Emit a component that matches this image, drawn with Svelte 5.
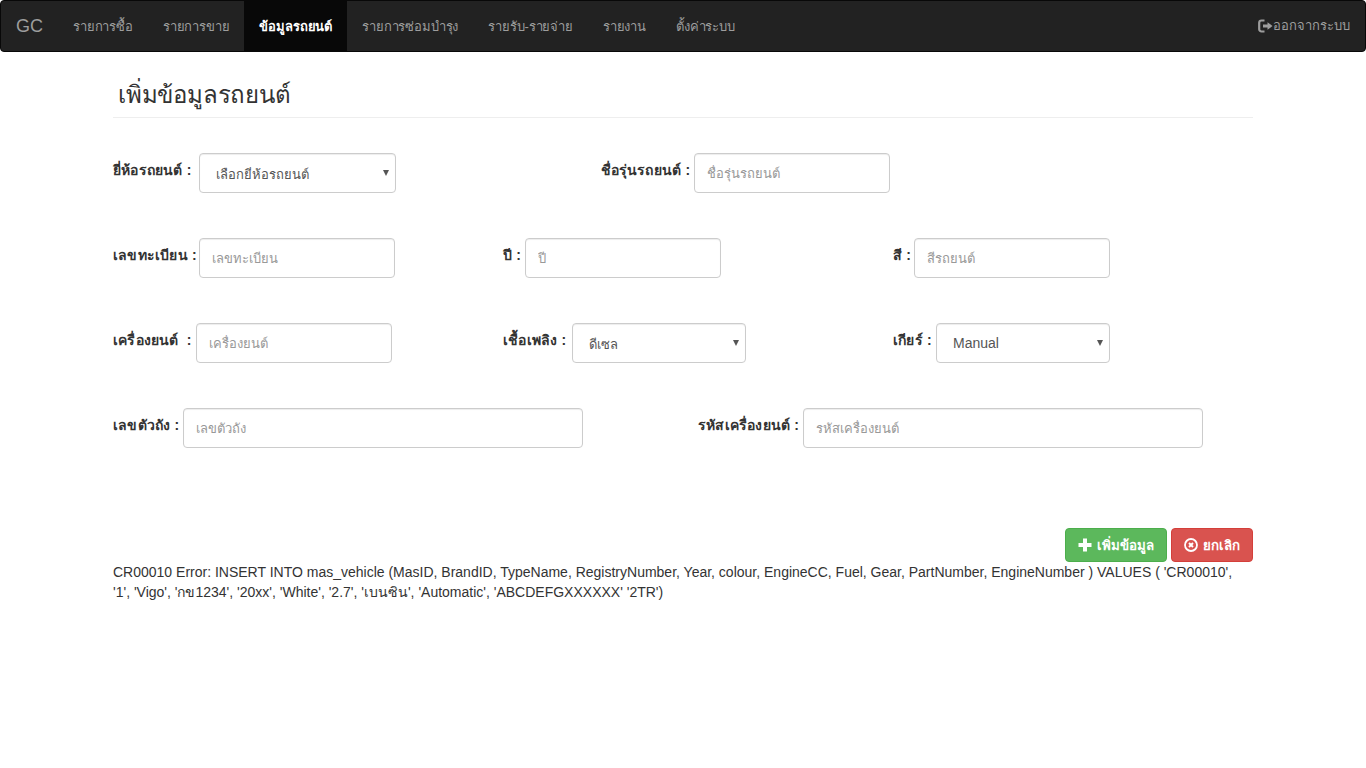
<script>
    const menu = [
        { label: 'รายการซื้อ' },
        { label: 'รายการขาย' },
        { label: 'ข้อมูลรถยนต์', active: true },
        { label: 'รายการซ่อมบำรุง' },
        { label: 'รายรับ-รายจ่าย' },
        { label: 'รายงาน' },
        { label: 'ตั้งค่าระบบ' }
    ];

    // col = bootstrap column span, gutter = label box width in front of the control
    const rows = [
        [
            { id: 'brand', label: 'ยี่ห้อรถยนต์ :', col: 'w5', gutter: 86, width: 197, options: ['เลือกยี่ห้อรถยนต์'] },
            { id: 'model', label: 'ชื่อรุ่นรถยนต์ :', col: 'w5', gutter: 93, width: 196, placeholder: 'ชื่อรุ่นรถยนต์' }
        ],
        [
            { id: 'reg', label: 'เลขทะเบียน :', col: 'w4', gutter: 86, width: 196, placeholder: 'เลขทะเบียน' },
            { id: 'year', label: 'ปี :', col: 'w4', gutter: 22, width: 196, placeholder: 'ปี' },
            { id: 'colour', label: 'สี :', col: 'w4', gutter: 21, width: 196, placeholder: 'สีรถยนต์' }
        ],
        [
            { id: 'engine', label: 'เครื่องยนต์\u00a0 :', col: 'w4', gutter: 83, width: 196, placeholder: 'เครื่องยนต์' },
            { id: 'fuel', label: 'เชื้อเพลิง :', col: 'w4', gutter: 69, width: 174, options: ['ดีเซล'] },
            { id: 'gear', label: 'เกียร์ :', col: 'w4', gutter: 43, width: 174, options: ['Manual'], latin: true }
        ],
        [
            { id: 'part', label: 'เลขตัวถัง :', col: 'w6', gutter: 70, width: 400, placeholder: 'เลขตัวถัง' },
            { id: 'engno', label: 'รหัสเครื่องยนต์ :', col: 'w6', gutter: 105, width: 400, placeholder: 'รหัสเครื่องยนต์' }
        ]
    ];
</script>

<nav class="navbar">
    <a class="brand" href="#top">GC</a>
    <ul class="nav">
        {#each menu as item}
            <li class:active={item.active}><a href="#top">{item.label}</a></li>
        {/each}
    </ul>
    <a class="logout" href="#top">
        <svg width="15" height="14" viewBox="0 0 15 14" aria-hidden="true">
            <path d="M6.500 1.500H3.500A2.300 2.300 0 0 0 1.200 3.800v6.400a2.300 2.300 0 0 0 2.300 2.300h3" fill="none" stroke="currentColor" stroke-width="2.200" />
            <path d="M5 5.600h4.500V3.200L14.500 7l-5 3.800V8.400H5z" fill="currentColor" />
        </svg>ออกจากระบบ
    </a>
</nav>

<div class="container">
    <div class="page-header"><h3>เพิ่มข้อมูลรถยนต์</h3></div>

    <div class="form">
        {#each rows as row}
            <div class="row">
                {#each row as field}
                    <div class="col {field.col}">
                        <label for={field.id} style="width: {field.gutter}px">{field.label}</label>
                        {#if field.options}
                            <span class="select-wrap" style="width: {field.width}px">
                                <select id={field.id} class:latin={field.latin}>
                                    {#each field.options as option}
                                        <option>{option}</option>
                                    {/each}
                                </select>
                            </span>
                        {:else}
                            <input id={field.id} style="width: {field.width}px" placeholder={field.placeholder} />
                        {/if}
                    </div>
                {/each}
            </div>
        {/each}
    </div>

    <div class="actions">
        <button class="btn success">
            <svg width="14" height="14" viewBox="0 0 14 14" aria-hidden="true">
                <path d="M5 .5h4v4.500h4.500v4H9v4.500H5V9H.5V5H5z" fill="currentColor" />
            </svg>
            เพิ่มข้อมูล
        </button>
        <button class="btn danger">
            <svg width="14" height="14" viewBox="0 0 14 14" aria-hidden="true">
                <circle cx="7" cy="7" r="6" fill="none" stroke="currentColor" stroke-width="1.800" />
                <path d="M5 5l4 4M9 5l-4 4" stroke="currentColor" stroke-width="2" />
            </svg>
            ยกเลิก
        </button>
    </div>

    <p class="sql">CR00010 Error: INSERT INTO mas_vehicle (MasID, BrandID, TypeName, RegistryNumber, Year, colour, EngineCC, Fuel, Gear, PartNumber, EngineNumber ) VALUES ( 'CR00010', '1', 'Vigo', 'กข1234', '20xx', 'White', '2.7', 'เบนซิน', 'Automatic', 'ABCDEFGXXXXXX' '2TR')</p>
</div>

<style>
    :global(body) {
        margin: 0;
        background: #fff;
        color: #333;
        font-family: "Liberation Sans", "Noto Sans", sans-serif;
        font-size: 14px;
        line-height: 20px;
    }

    .navbar {
        display: flex;
        align-items: stretch;
        box-sizing: border-box;
        height: 52px;
        background: #222;
        border: 1px solid #080808;
        border-radius: 4px;
    }

    .brand {
        padding: 15px;
        font-size: 18px;
        line-height: 20px;
        color: #9d9d9d;
        text-decoration: none;
    }

    .nav {
        display: flex;
        margin: 0;
        padding: 0;
        list-style: none;
        font-size: 13px;
        letter-spacing: -0.15px;
    }

    .nav a {
        display: block;
        padding: 16px 15px 14px;
        color: #9d9d9d;
        text-decoration: none;
    }

    .nav .active a {
        background: #080808;
        color: #fff;
        font-weight: bold;
    }

    .logout {
        display: flex;
        align-items: center;
        height: 20px;
        margin-left: auto;
        padding: 15px;
        font-size: 13px;
        color: #9d9d9d;
        text-decoration: none;
    }

    .container {
        box-sizing: border-box;
        width: 1170px;
        margin: 0 auto;
        padding: 0 15px;
    }

    .page-header {
        padding: 26px 0 5px 5px;
        border-bottom: 1px solid #eee;
    }

    h3 {
        margin: 0;
        font-size: 24px;
        font-weight: 500;
        line-height: 34px;
        letter-spacing: -0.2px;
    }

    .form {
        margin: 35px -15px 0;
    }

    .row {
        display: flex;
        height: 85px;
    }

    .col {
        display: flex;
        box-sizing: border-box;
        height: 40px;
        padding: 0 15px;
        white-space: nowrap;
    }

    .w4 { width: 390px; }
    .w5 { width: 487.5px; }
    .w6 { width: 585px; }

    label {
        flex: none;
        padding-top: 7px;
        font-weight: bold;
        letter-spacing: 0.2px;
    }

    input,
    select {
        box-sizing: border-box;
        height: 40px;
        margin: 0;
        padding: 6px 12px;
        font-family: inherit;
        font-size: 13px;
        color: #555;
        background: #fff;
        border: 1px solid #ccc;
        border-radius: 4px;
        box-shadow: inset 0 1px 1px rgba(0, 0, 0, 0.075);
    }

    input::placeholder {
        color: #999;
    }

    .select-wrap {
        position: relative;
        display: block;
        height: 40px;
    }

    .select-wrap::after {
        content: "";
        position: absolute;
        top: 17px;
        right: 7px;
        border-style: solid;
        border-width: 6px 3px 0;
        border-color: #555 transparent transparent;
        pointer-events: none;
    }

    select {
        width: 100%;
        appearance: none;
        padding: 8px 12px 6px 16px;
    }

    select.latin {
        padding-top: 6px;
        font-size: 14px;
    }

    .actions {
        display: flex;
        justify-content: flex-end;
        gap: 4px;
        margin-top: 35px;
    }

    .btn {
        display: inline-flex;
        align-items: center;
        gap: 5px;
        height: 34px;
        padding: 6px 12px;
        font-family: inherit;
        font-size: 13.300px;
        font-weight: bold;
        color: #fff;
        border: 1px solid transparent;
        border-radius: 4px;
    }

    .success {
        background: #5cb85c;
        border-color: #4cae4c;
    }

    .danger {
        background: #d9534f;
        border-color: #d43f3a;
    }

    .sql {
        max-width: 1125px;
        margin: 0;
    }
</style>
